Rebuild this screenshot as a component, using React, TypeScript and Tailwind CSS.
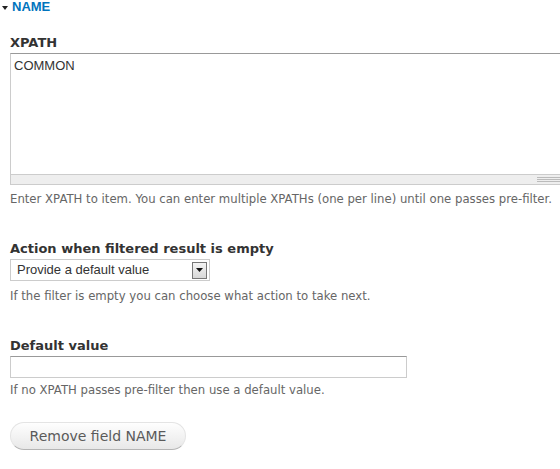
import React from "react";

const label = "block text-[13px] leading-[18px] font-bold text-[#333] [font-family:'DejaVu_Sans',Verdana,sans-serif]";
const desc = "whitespace-nowrap text-[11.7px] leading-[16px] text-[#666] [font-family:'DejaVu_Sans',Verdana,sans-serif]";

export default function App() {
  return (
    <div className="h-[469px] w-[560px] overflow-hidden bg-white">
      <div className="flex h-[14px] items-center gap-[4px] pl-[2px]">
        <svg width="6" height="4" viewBox="0 0 6 4" className="mt-[1px]">
          <path d="M0 0H6L3 4Z" fill="#222" />
        </svg>
        <span className="text-[13px] font-bold uppercase leading-[14px] text-[#0074bd] [font-family:'Liberation_Sans',Arial,sans-serif]">
          NAME
        </span>
      </div>

      <div className="pl-[10px]">
        <label className={`${label} mt-[20px] mb-[1px]`}>XPATH</label>
        <div className="w-[560px]">
          <textarea
            defaultValue="COMMON"
            className="block h-[122px] w-full resize-none border border-[#ccc] border-t-[#999] px-[3px] py-[4px] text-[13px] leading-[16px] text-[#333] outline-none [font-family:'Liberation_Sans',Arial,sans-serif]"
          />
          <div className="flex h-[10px] items-center justify-end border border-t-0 border-[#ccc] bg-[#eee] pr-[5px]">
            <div className="flex w-[27px] flex-col gap-[1px]">
              <div className="h-px bg-[#bbb]" />
              <div className="h-px bg-[#bbb]" />
              <div className="h-px bg-[#bbb]" />
            </div>
          </div>
        </div>
        <p className={`${desc} mt-[6px]`}>
          Enter XPATH to item. You can enter multiple XPATHs (one per line) until one passes pre-filter.
        </p>

        <label className={`${label} mt-[33px] mb-[1px]`}>Action when filtered result is empty</label>
        <div className="flex h-[22px] w-[200px] items-center justify-between border border-[#ccc] pl-[6px] pr-[2px] text-[13px] text-[#333] [font-family:'Liberation_Sans',Arial,sans-serif]">
          <span>Provide a default value</span>
          <div className="flex h-[17px] w-[15px] items-center justify-center border border-[#777] bg-gradient-to-b from-[#f4f4f4] to-[#d8d8d8]">
            <svg width="7" height="4" viewBox="0 0 7 4">
              <path d="M0 0H7L3.5 4Z" fill="#111" />
            </svg>
          </div>
        </div>
        <p className={`${desc} mt-[7px]`}>If the filter is empty you can choose what action to take next.</p>

        <label className={`${label} mt-[33px] mb-[1px]`}>Default value</label>
        <input
          type="text"
          className="block h-[22px] w-[397px] border border-[#ccc] border-t-[#999] px-[3px] text-[13px] outline-none"
        />
        <p className={`${desc} mt-[4px]`}>If no XPATH passes pre-filter then use a default value.</p>

        <button className="mt-[24px] h-[28px] w-[176px] rounded-[20px] border border-[#e4e4e4] border-b-[#b4b4b4] bg-gradient-to-b from-[#fefefe] to-[#e8e8e8] text-[14px] text-[#5a5a5a] [font-family:'DejaVu_Sans',Verdana,sans-serif]">
          Remove field NAME
        </button>
      </div>
    </div>
  );
}
